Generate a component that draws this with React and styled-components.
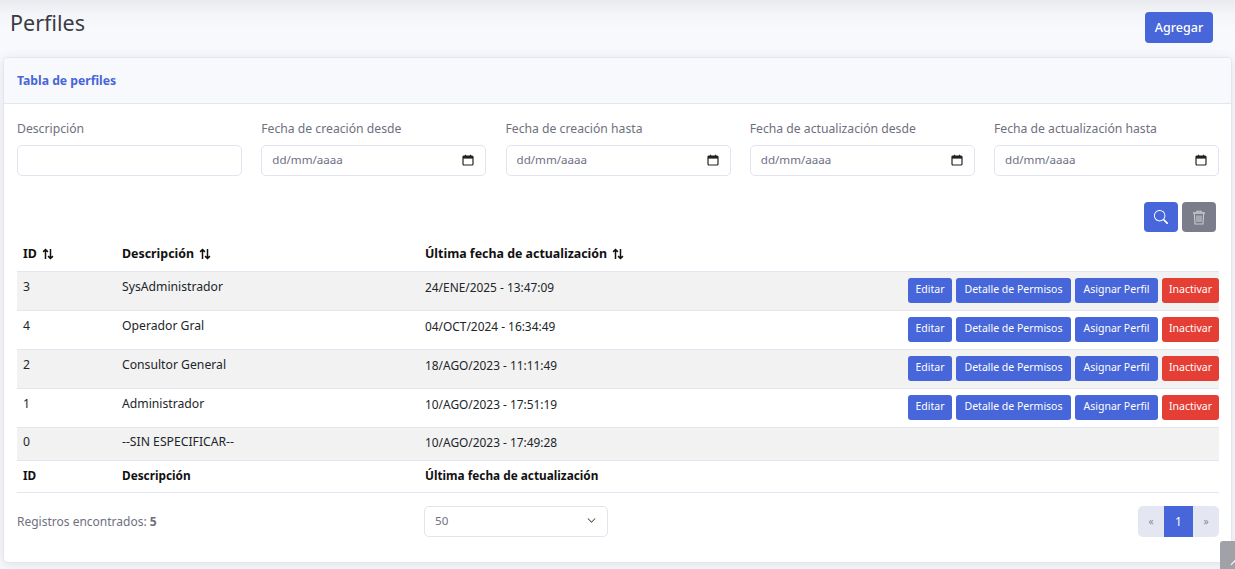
import styled, { createGlobalStyle } from "styled-components";
import { BsSearch, BsChevronDown } from "react-icons/bs";

const PRIMARY = "#4666d9";

const filters = [
  { label: "Descripción" },
  { label: "Fecha de creación desde", date: true },
  { label: "Fecha de creación hasta", date: true },
  { label: "Fecha de actualización desde", date: true },
  { label: "Fecha de actualización hasta", date: true },
];

const rows = [
  { id: 3, name: "SysAdministrador", date: "24/ENE/2025 - 13:47:09", actions: true },
  { id: 4, name: "Operador Gral", date: "04/OCT/2024 - 16:34:49", actions: true },
  { id: 2, name: "Consultor General", date: "18/AGO/2023 - 11:11:49", actions: true },
  { id: 1, name: "Administrador", date: "10/AGO/2023 - 17:51:19", actions: true },
  { id: 0, name: "--SIN ESPECIFICAR--", date: "10/AGO/2023 - 17:49:28" },
];

const GlobalStyle = createGlobalStyle`
  html, body {
    margin: 0;
    height: 569px;
    overflow: hidden;
    background: #f8f9fc;
    font-family: "Noto Sans", "Open Sans", sans-serif;
    color: #858796;
  }
  * { box-sizing: border-box; }
`;

const Page = styled.div`
  height: 569px;
  padding: 0 3px;
  background: linear-gradient(#e9eaee 0, #f4f5f9 14px, #f8f9fc 30px);
`;

const TopBar = styled.header`
  display: flex;
  justify-content: space-between;
  height: 57px;
  padding: 12px 19px 0 7px;
`;

const Title = styled.h1`
  margin: -1px 0 0;
  font-size: 21.5px;
  line-height: 24px;
  font-weight: 400;
  color: #3a3b45;
`;

const Button = styled.button`
  display: inline-flex;
  align-items: center;
  justify-content: center;
  border: 0;
  border-radius: 3px;
  padding: 0;
  font-family: inherit;
  color: #fff;
  white-space: nowrap;
  background: ${(p) => p.$bg || PRIMARY};
`;

const AddButton = styled(Button)`
  width: 68px;
  height: 31px;
  border-radius: 4px;
  font-size: 12.5px;
  font-weight: 500;
`;

const Card = styled.section`
  height: 506px;
  background: #fff;
  border: 1px solid #e3e6f0;
  border-radius: 5px;
  box-shadow: 0 2px 12px rgba(58, 59, 69, 0.12);
  overflow: hidden;
`;

const CardHeader = styled.div`
  height: 46px;
  padding: 0 13px;
  display: flex;
  align-items: center;
  background: #f8f9fc;
  border-bottom: 1px solid #e3e6f0;
  font-size: 12.2px;
  font-weight: 700;
  color: ${PRIMARY};
`;

const CardBody = styled.div`
  padding: 16px 12px 0 13px;
`;

const Filters = styled.div`
  display: grid;
  grid-template-columns: repeat(5, 225px);
  justify-content: space-between;
`;

const Field = styled.div`
  display: flex;
  flex-direction: column;
  gap: 7px;
`;

const Label = styled.label`
  font-size: 12.2px;
  line-height: 18px;
  color: #6e707e;
`;

const InputBox = styled.div`
  height: 31px;
  display: flex;
  align-items: center;
  justify-content: space-between;
  padding: 0 11px 2px 10px;
  border: 1px solid #e1e3ee;
  border-radius: 5px;
  font-size: 11.6px;
  color: #6e707e;
`;

const SearchActions = styled.div`
  display: flex;
  justify-content: flex-end;
  gap: 4px;
  padding: 26px 3px 0 0;
`;

const IconButton = styled(Button)`
  width: 34px;
  height: 30px;
  border-radius: 4px;
  font-size: 14px;
`;

const Table = styled.table`
  width: 100%;
  margin-top: 4px;
  border-collapse: collapse;
  table-layout: fixed;
  font-size: 12.2px;
  color: #212529;
`;

const HeadCell = styled.th`
  height: ${(p) => p.$h}px;
  padding: 0 6px ${(p) => (p.$foot ? 2 : 0)}px;
  text-align: left;
  font-weight: 700;
  font-size: ${(p) => (p.$foot ? 11.8 : 12.4)}px;
  color: #111;
  border-bottom: 1px solid #e3e6f0;
  white-space: nowrap;
`;

const Row = styled.tr`
  height: ${(p) => (p.$actions ? 39 : 33)}px;
  background: ${(p) => (p.$striped ? "#f2f2f2" : "#fff")};
  border-bottom: 1px solid #e3e6f0;
`;

const Cell = styled.td`
  padding: ${(p) => (p.$actions ? "6px" : "0 6px 3px")};
  vertical-align: ${(p) => (p.$actions ? "top" : "middle")};
  line-height: 18px;
`;

const DateCell = styled(Cell)`
  font-size: 11.9px;
`;

const ActionCell = styled.td`
  padding: 0;
  vertical-align: middle;
`;

const Actions = styled.div`
  display: flex;
  justify-content: flex-end;
  gap: 4px;
`;

const RowButton = styled(Button)`
  height: 25px;
  width: ${(p) => p.$w}px;
  padding-bottom: 3px;
  font-size: 10.5px;
`;

const SortIcon = styled.svg`
  width: 12px;
  height: 12px;
  margin-left: 5px;
  vertical-align: -2px;
`;

const Footer = styled.div`
  display: grid;
  grid-template-columns: 407px 184px 1fr;
  align-items: center;
  margin-top: 13px;
  font-size: 12px;
  color: #6e707e;
`;

const Count = styled.b`
  color: #6e707e;
`;

const Pagination = styled.nav`
  justify-self: end;
  display: flex;
  height: 31px;
  border-radius: 5px;
  overflow: hidden;
`;

const PageItem = styled.span`
  width: ${(p) => (p.$active ? 29 : 26)}px;
  display: flex;
  align-items: center;
  justify-content: center;
  font-size: ${(p) => (p.$active ? 12 : 10)}px;
  background: ${(p) => (p.$active ? PRIMARY : "#e4e6f1")};
  color: ${(p) => (p.$active ? "#fff" : "#8a8c9a")};
`;

const ScrollTop = styled.div`
  position: fixed;
  left: 1220px;
  top: 541px;
  width: 15px;
  height: 28px;
  background: #a1a2a8;
  border-radius: 3px 0 0 0;
  overflow: hidden;
  &::after {
    content: "";
    position: absolute;
    left: 12px;
    top: 20px;
    width: 6px;
    height: 6px;
    border-left: 1.5px solid #fff;
    border-top: 1.5px solid #fff;
    transform: rotate(45deg);
  }
`;

function SortArrows() {
  return (
    <SortIcon viewBox="0 0 12 12" fill="none" stroke="#111" strokeWidth="1.5">
      <path d="M3.5 11V1.5M1.1 3.9L3.5 1.5L5.9 3.9" />
      <path d="M8.5 1V10.5M6.1 8.1L8.5 10.5L10.9 8.1" />
    </SortIcon>
  );
}

function CalendarIcon() {
  return (
    <svg width="12" height="12" viewBox="0 0 12 12" fill="none">
      <rect x="1" y="2" width="10" height="9" rx="1" stroke="#222" strokeWidth="1.2" />
      <rect x="1" y="2" width="10" height="2.6" fill="#222" />
      <path d="M3.5 0.8V2.4M8.5 0.8V2.4" stroke="#222" strokeWidth="1.2" />
    </svg>
  );
}

function TrashIcon() {
  return (
    <svg width="14" height="15" viewBox="0 0 14 15" fill="none" stroke="#c9cad1" strokeWidth="1.1">
      <path d="M1 3H13" strokeWidth="1.4" />
      <path d="M4.8 2.8V1.2H9.2V2.8" />
      <path d="M2.3 3.2L3 14H11L11.7 3.2" />
      <path d="M5 5.5V12M7 5.5V12M9 5.5V12" />
    </svg>
  );
}

export default function App() {
  return (
    <>
      <GlobalStyle />
      <Page>
        <TopBar>
          <Title>Perfiles</Title>
          <AddButton>Agregar</AddButton>
        </TopBar>
        <Card>
          <CardHeader>Tabla de perfiles</CardHeader>
          <CardBody>
            <Filters>
              {filters.map((f) => (
                <Field key={f.label}>
                  <Label>{f.label}</Label>
                  <InputBox>
                    {f.date && <span>dd/mm/aaaa</span>}
                    {f.date && <CalendarIcon />}
                  </InputBox>
                </Field>
              ))}
            </Filters>
            <SearchActions>
              <IconButton><BsSearch /></IconButton>
              <IconButton $bg="#7c7d8b"><TrashIcon /></IconButton>
            </SearchActions>
            <Table>
              <colgroup>
                <col style={{ width: 99 }} />
                <col style={{ width: 303 }} />
                <col style={{ width: 300 }} />
                <col />
              </colgroup>
              <thead>
                <tr>
                  <HeadCell $h={35}>ID<SortArrows /></HeadCell>
                  <HeadCell $h={35}>Descripción<SortArrows /></HeadCell>
                  <HeadCell $h={35}>Última fecha de actualización<SortArrows /></HeadCell>
                  <HeadCell $h={35} />
                </tr>
              </thead>
              <tbody>
                {rows.map((r, i) => (
                  <Row key={r.id} $striped={i % 2 === 0} $actions={r.actions}>
                    <Cell $actions={r.actions}>{r.id}</Cell>
                    <Cell $actions={r.actions}>{r.name}</Cell>
                    <DateCell $actions={r.actions}>{r.date}</DateCell>
                    <ActionCell>
                      {r.actions && (
                        <Actions>
                          <RowButton $w={44}>Editar</RowButton>
                          <RowButton $w={115}>Detalle de Permisos</RowButton>
                          <RowButton $w={83}>Asignar Perfil</RowButton>
                          <RowButton $w={57} $bg="#e53e35">Inactivar</RowButton>
                        </Actions>
                      )}
                    </ActionCell>
                  </Row>
                ))}
              </tbody>
              <tfoot>
                <tr>
                  <HeadCell $h={32} $foot>ID</HeadCell>
                  <HeadCell $h={32} $foot>Descripción</HeadCell>
                  <HeadCell $h={32} $foot>Última fecha de actualización</HeadCell>
                  <HeadCell $h={32} $foot />
                </tr>
              </tfoot>
            </Table>
            <Footer>
              <span>Registros encontrados: <Count>5</Count></span>
              <InputBox>
                <span>50</span>
                <BsChevronDown size={9} color="#444" strokeWidth={0.5} />
              </InputBox>
              <Pagination>
                <PageItem>«</PageItem>
                <PageItem $active>1</PageItem>
                <PageItem>»</PageItem>
              </Pagination>
            </Footer>
          </CardBody>
        </Card>
        <ScrollTop />
      </Page>
    </>
  );
}
